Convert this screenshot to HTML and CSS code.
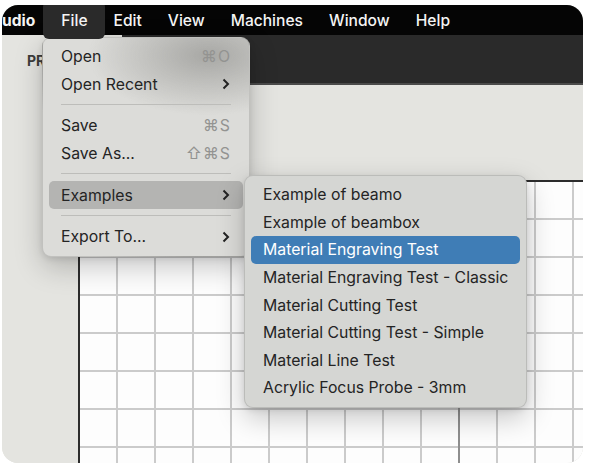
FILE: index.html
```html
<html>

<head>
    <link rel="stylesheet" href="styles.css">
</head>

<body>
    <div class="window">
        <div class="menubar">
            <span class="app-name">udio</span>
            <span class="bar-item active">File</span>
            <span class="bar-item">Edit</span>
            <span class="bar-item">View</span>
            <span class="bar-item">Machines</span>
            <span class="bar-item">Window</span>
            <span class="bar-item">Help</span>
        </div>
        <div class="topbar">
            <div class="preview-tab">PR</div>
            <div class="tools"></div>
        </div>
        <div class="workarea">
            <div class="canvas"></div>
        </div>
    </div>

    <div class="menu file-menu">
        <div class="menu-item"><span>Open</span><span class="shortcut">⌘O</span></div>
        <div class="menu-item"><span>Open Recent</span>
            <svg class="chevron" width="8" height="12" viewBox="0 0 8 12"><path d="M1.5 1.5 L6 6 L1.5 10.5" /></svg>
        </div>
        <div class="separator"></div>
        <div class="menu-item"><span>Save</span><span class="shortcut">⌘S</span></div>
        <div class="menu-item"><span>Save As...</span><span class="shortcut">⇧⌘S</span></div>
        <div class="separator"></div>
        <div class="menu-item open"><span>Examples</span>
            <svg class="chevron" width="8" height="12" viewBox="0 0 8 12"><path d="M1.5 1.5 L6 6 L1.5 10.5" /></svg>
        </div>
        <div class="separator"></div>
        <div class="menu-item"><span>Export To...</span>
            <svg class="chevron" width="8" height="12" viewBox="0 0 8 12"><path d="M1.5 1.5 L6 6 L1.5 10.5" /></svg>
        </div>
    </div>

    <div class="menu sub-menu">
        <div class="menu-item">Example of beamo</div>
        <div class="menu-item">Example of beambox</div>
        <div class="menu-item selected">Material Engraving Test</div>
        <div class="menu-item">Material Engraving Test - Classic</div>
        <div class="menu-item">Material Cutting Test</div>
        <div class="menu-item">Material Cutting Test - Simple</div>
        <div class="menu-item">Material Line Test</div>
        <div class="menu-item">Acrylic Focus Probe - 3mm</div>
    </div>
</body>

</html>
```

FILE: styles.css
```css
body {
    margin: 0;
    background-color: #ffffff;
    font-family: Inter, "Noto Sans", "DejaVu Sans", sans-serif;
    position: relative;
    width: 590px;
    height: 465px;
    overflow: hidden;
}

.window {
    width: 581px;
    height: 458px;
    margin: 5px 0 0 2px;
    border-radius: 16px;
    overflow: hidden;
    display: flex;
    flex-direction: column;
    background: #e4e4e0;
}

.menubar {
    height: 30px;
    background: #050505;
    display: flex;
    align-items: center;
    gap: 26px;
    color: #f4f4f4;
    font-size: 15.6px;
    font-weight: 500;
}

.app-name {
    font-weight: 700;
}

.bar-item {
    position: relative;
    z-index: 1;
}

.bar-item.active::before {
    content: "";
    position: absolute;
    left: -18px;
    right: -17px;
    top: -10px;
    bottom: -9px;
    background: #2a2a2a;
    border-radius: 6px;
    z-index: -1;
}

.topbar {
    height: 50px;
    display: flex;
}

.preview-tab {
    width: 120px;
    padding: 17px 0 0 25px;
    box-sizing: border-box;
    background: #e4e4e0;
    font-size: 14px;
    font-weight: 700;
    color: #3c3c3c;
}

.tools {
    flex: 1;
    background: #2a2a2a;
    border-bottom: 2px solid #4a4a4a;
}

.workarea {
    flex: 1;
    display: flex;
    padding: 95px 0 0 76px;
    background: #e4e4e0;
}

.canvas {
    flex: 1;
    border-left: 2px solid #2c2c2c;
    border-top: 2px solid #2c2c2c;
    background-color: #fdfdfd;
    background-image:
        linear-gradient(to right, #8e8e8e 2px, transparent 2px),
        linear-gradient(to right, #cbcbcb 2px, transparent 2px),
        linear-gradient(to bottom, #cbcbcb 2px, transparent 2px);
    background-size: 380px 100%, 38px 38px, 38px 38px;
    background-position: 378px 0, 36px 36px, 36px 36px;
}

.menu {
    position: absolute;
    box-sizing: border-box;
    border-radius: 9px;
    border: 1px solid rgba(0, 0, 0, 0.12);
    box-shadow: 0 10px 28px rgba(0, 0, 0, 0.22), 0 2px 6px rgba(0, 0, 0, 0.1);
    font-size: 15.8px;
    color: #242424;
    padding: 5px 6px;
    white-space: nowrap;
}

.file-menu {
    left: 42px;
    top: 37px;
    width: 208px;
    background:
        radial-gradient(ellipse 120px 60px at 80% 8%, rgba(150, 150, 147, 0.75), rgba(150, 150, 147, 0) 100%),
        #dcdcd9;
}

.sub-menu {
    left: 244px;
    top: 175px;
    width: 283px;
    background: #d5d6d3;
}

.menu-item {
    height: 27.6px;
    display: flex;
    align-items: center;
    justify-content: space-between;
    padding: 0 12px;
    border-radius: 5px;
}

.sub-menu .menu-item {
    padding-right: 0;
}

.menu-item.open {
    background: #b4b4b2;
}

.menu-item.selected {
    background: #3f7db6;
    color: #ffffff;
}

.shortcut {
    color: #939391;
    letter-spacing: 1px;
}

.chevron {
    fill: none;
    stroke: #222222;
    stroke-width: 2;
    margin-right: 1px;
}

.separator {
    height: 14px;
    margin: 0 12px;
    background: linear-gradient(#bdbdba, #bdbdba) no-repeat 0 6px / 100% 1px;
}
```
